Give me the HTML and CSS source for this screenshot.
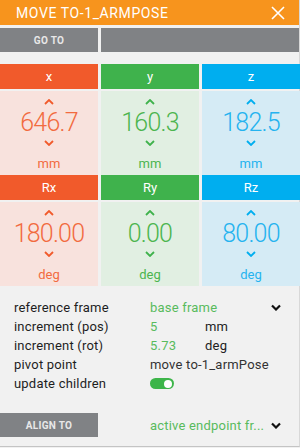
FILE: index.html
```html
<!DOCTYPE html>
<html lang="en">
<head>
<meta charset="UTF-8" />
<title>Move to</title>
<link rel="stylesheet" href="styles.css">
</head>
<body>
<div class="panel">
  <div class="title-bar">
    <span class="title">MOVE TO-1_ARMPOSE</span>
    <svg class="close" width="16" height="16" viewBox="0 0 16 16"><path d="M2 2 L14 14 M14 2 L2 14" stroke="#fff" stroke-width="1.6" fill="none"/></svg>
  </div>

  <div class="btn-row">
    <button class="gray-btn">GO TO</button>
    <div class="gray-fill"></div>
  </div>

  <div class="axes">
    <div class="axis red">
      <div class="axis-head">x</div>
      <div class="axis-body">
        <svg class="caret" viewBox="0 0 10 6"><path d="M1 5 L5 1 L9 5"/></svg>
        <div class="val">646.7</div>
        <svg class="caret" viewBox="0 0 10 6"><path d="M1 1 L5 5 L9 1"/></svg>
        <div class="unit">mm</div>
      </div>
      <div class="axis-head">Rx</div>
      <div class="axis-body">
        <svg class="caret" viewBox="0 0 10 6"><path d="M1 5 L5 1 L9 5"/></svg>
        <div class="val">180.00</div>
        <svg class="caret" viewBox="0 0 10 6"><path d="M1 1 L5 5 L9 1"/></svg>
        <div class="unit">deg</div>
      </div>
    </div>
    <div class="axis green">
      <div class="axis-head">y</div>
      <div class="axis-body">
        <svg class="caret" viewBox="0 0 10 6"><path d="M1 5 L5 1 L9 5"/></svg>
        <div class="val">160.3</div>
        <svg class="caret" viewBox="0 0 10 6"><path d="M1 1 L5 5 L9 1"/></svg>
        <div class="unit">mm</div>
      </div>
      <div class="axis-head">Ry</div>
      <div class="axis-body">
        <svg class="caret" viewBox="0 0 10 6"><path d="M1 5 L5 1 L9 5"/></svg>
        <div class="val">0.00</div>
        <svg class="caret" viewBox="0 0 10 6"><path d="M1 1 L5 5 L9 1"/></svg>
        <div class="unit">deg</div>
      </div>
    </div>
    <div class="axis blue">
      <div class="axis-head">z</div>
      <div class="axis-body">
        <svg class="caret" viewBox="0 0 10 6"><path d="M1 5 L5 1 L9 5"/></svg>
        <div class="val">182.5</div>
        <svg class="caret" viewBox="0 0 10 6"><path d="M1 1 L5 5 L9 1"/></svg>
        <div class="unit">mm</div>
      </div>
      <div class="axis-head">Rz</div>
      <div class="axis-body">
        <svg class="caret" viewBox="0 0 10 6"><path d="M1 5 L5 1 L9 5"/></svg>
        <div class="val">80.00</div>
        <svg class="caret" viewBox="0 0 10 6"><path d="M1 1 L5 5 L9 1"/></svg>
        <div class="unit">deg</div>
      </div>
    </div>
  </div>

  <div class="props">
    <div class="prop">
      <span class="label">reference frame</span>
      <span class="value green-text">base frame</span>
      <svg class="drop" viewBox="0 0 10 6"><path d="M1 1 L5 5 L9 1"/></svg>
    </div>
    <div class="prop">
      <span class="label">increment (pos)</span>
      <span class="value green-text short">5</span>
      <span class="suffix">mm</span>
    </div>
    <div class="prop">
      <span class="label">increment (rot)</span>
      <span class="value green-text short">5.73</span>
      <span class="suffix">deg</span>
    </div>
    <div class="prop">
      <span class="label">pivot point</span>
      <span class="value">move to-1_armPose</span>
    </div>
    <div class="prop">
      <span class="label">update children</span>
      <span class="toggle"><span class="knob"></span></span>
    </div>
  </div>

  <div class="align-row">
    <button class="gray-btn">ALIGN TO</button>
    <span class="value green-text">active endpoint fr...</span>
    <svg class="drop" viewBox="0 0 10 6"><path d="M1 1 L5 5 L9 1"/></svg>
  </div>
</div>
</body>
</html>
```

FILE: styles.css
```css
* {
  box-sizing: border-box;
}
body, html {
  margin: 0;
  padding: 0;
  font-family: Roboto, "Liberation Sans", sans-serif;
  background: #f1f1f1;
}
.panel {
  width: 300px;
  height: 447px;
  background: #f1f1f1;
  border-bottom: 1px solid #c4c4c4;
  border-right: 1px solid #d8d8d8;
}
.title-bar {
  height: 25px;
  background: #f7941d;
  display: flex;
  align-items: center;
  justify-content: space-between;
  padding: 0 13px 0 16px;
}
.title {
  color: #fff;
  font-size: 14px;
  letter-spacing: 0.6px;
}
.close {
  width: 16px;
  height: 16px;
}
.btn-row {
  display: flex;
  gap: 3px;
  margin-top: 3px;
  height: 24px;
}
.gray-btn {
  width: 98px;
  height: 24px;
  border: none;
  background: #808285;
  color: #e8e8e8;
  font-family: Roboto, sans-serif;
  font-size: 10px;
  font-weight: 700;
  letter-spacing: 0.3px;
  padding: 0;
}
.gray-fill {
  flex: 1;
  background: #808285;
}
.axes {
  display: grid;
  grid-template-columns: 98px 98px 98px;
  gap: 3px;
  margin-top: 12px;
}
.axis-head {
  height: 25px;
  line-height: 25px;
  text-align: center;
  color: #fff;
  font-size: 13px;
}
.axis-head + .axis-body {
  margin-top: 2px;
}
.axis-body {
  height: 84px;
  display: flex;
  flex-direction: column;
  align-items: center;
  padding-top: 8px;
}
.caret {
  width: 10px;
  height: 6px;
  fill: none;
  stroke-width: 1.8;
}
.val {
  font-size: 25px;
  font-weight: 300;
  height: 34px;
  line-height: 34px;
  margin: 1px 0 0;
  letter-spacing: -0.8px;
}
.unit {
  font-size: 13px;
  margin-top: 10px;
}
.red .axis-head { background: #f15a2b; }
.red .axis-body { background: #f8e2dd; color: #f26b3f; }
.red .caret { stroke: #f15a2b; }
.green .axis-head { background: #3fb24c; }
.green .axis-body { background: #e1efe2; color: #4cb54f; }
.green .caret { stroke: #3fb24c; }
.blue .axis-head { background: #00aeef; }
.blue .axis-body { background: #d5ebf5; color: #25b3ef; }
.blue .caret { stroke: #00aeef; }
.props {
  padding: 12px 0 0 14px;
}
.prop {
  display: flex;
  align-items: center;
  height: 19px;
  font-size: 13px;
  letter-spacing: 0.2px;
  color: #1e1e1e;
}
.label {
  width: 136px;
}
.value {
  color: #333;
}
.green-text {
  color: #58bb5d;
}
.short {
  width: 55px;
}
.suffix {
  color: #222;
}
.drop {
  width: 10px;
  height: 7px;
  fill: none;
  stroke: #111;
  stroke-width: 2.2;
  margin-left: auto;
  margin-right: 18px;
}
.toggle {
  width: 24px;
  height: 11px;
  border-radius: 6px;
  background: #3db54a;
  display: flex;
  align-items: center;
  justify-content: flex-end;
  padding-right: 2px;
}
.knob {
  width: 8px;
  height: 8px;
  border-radius: 50%;
  background: #fff;
}
.align-row {
  display: flex;
  align-items: center;
  margin-top: 20px;
  font-size: 13px;
  letter-spacing: 0.2px;
}
.align-row .value {
  margin-left: 52px;
}
```
